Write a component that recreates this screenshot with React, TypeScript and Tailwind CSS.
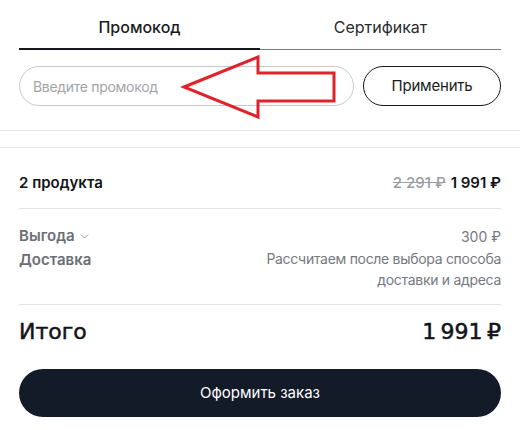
import { ChevronDown } from "lucide-react";

const font = { fontFamily: "Inter, 'Noto Sans', sans-serif" };

function PromoArrow() {
  return (
    <svg
      className="pointer-events-none absolute left-0 top-0"
      width="520"
      height="140"
      viewBox="0 0 520 140"
    >
      <polygon
        points="184,87 258,57 258,73 334,73 334,101 258,101 258,117"
        fill="none"
        stroke="#e0232b"
        strokeWidth="3"
        strokeLinejoin="miter"
      />
    </svg>
  );
}

export default function App() {
  return (
    <div className="relative w-[520px] h-[430px] bg-white text-[#111318]" style={font}>
      <div className="px-[19px]">
        <div className="flex">
          <button className="flex-1 pt-[15px] pb-[9px] border-b-2 border-[#16181d] text-[16px] leading-6 font-medium text-[#1c1d21]">
            Промокод
          </button>
          <button className="flex-1 pt-[15px] pb-[10px] border-b border-[#7a7c80] text-[16px] leading-6 text-[#2a2b2f]">
            Сертификат
          </button>
        </div>

        <div className="mt-4 flex gap-[9px]">
          <input
            className="h-10 flex-1 rounded-full border border-[#c9c9cc] px-[13px] text-[14px] tracking-[-0.3px] outline-none placeholder:text-[#a3a4a8]"
            placeholder="Введите промокод"
          />
          <button className="h-10 w-[138px] rounded-full border border-[#16181d] text-[15px] tracking-[-0.2px] text-[#1c1d21]">
            Применить
          </button>
        </div>
      </div>

      <div className="mt-6 h-[18px] border-y border-[#e6e6e8]" />

      <div className="px-[19px]">
        <div className="flex items-center justify-between pt-[24px] pb-[14px] border-b border-[#e3e3e5] leading-[22px]">
          <span className="text-[15px] font-semibold">2 продукта</span>
          <span className="flex items-center gap-[5px] text-[15px]">
            <span className="font-medium text-[#9a9ca1] line-through">2 291 ₽</span>
            <span className="font-semibold">1 991 ₽</span>
          </span>
        </div>

        <div className="pt-[15px] pb-[14px] border-b border-[#e3e3e5]">
          <div className="flex h-6 items-center justify-between">
            <span className="flex items-center gap-[3px] text-[15px] font-semibold text-[#6b6e75]">
              Выгода
              <ChevronDown size={13} strokeWidth={1.5} className="text-[#7d8087]" />
            </span>
            <span className="text-[14px] text-[#76797f]">300 ₽</span>
          </div>
          <div className="flex items-start justify-between">
            <span className="text-[15px] leading-6 font-semibold text-[#6b6e75]">Доставка</span>
            <span className="text-right text-[14px] leading-[21px] tracking-[-0.3px] text-[#76797f]">
              Рассчитаем после выбора способа
              <br />
              доставки и адреса
            </span>
          </div>
        </div>

        <div
          className="flex items-center justify-between pt-[13px] text-[22px] leading-7 [-webkit-text-stroke:0.5px_#111318]"
          style={{ fontFamily: "'DejaVu Sans', sans-serif" }}
        >
          <span>Итого</span>
          <span>1&thinsp;991&thinsp;₽</span>
        </div>

        <button className="mt-[23px] h-12 w-full rounded-full bg-[#131a28] text-[15px] text-white">
          Оформить заказ
        </button>
      </div>

      <PromoArrow />
    </div>
  );
}
